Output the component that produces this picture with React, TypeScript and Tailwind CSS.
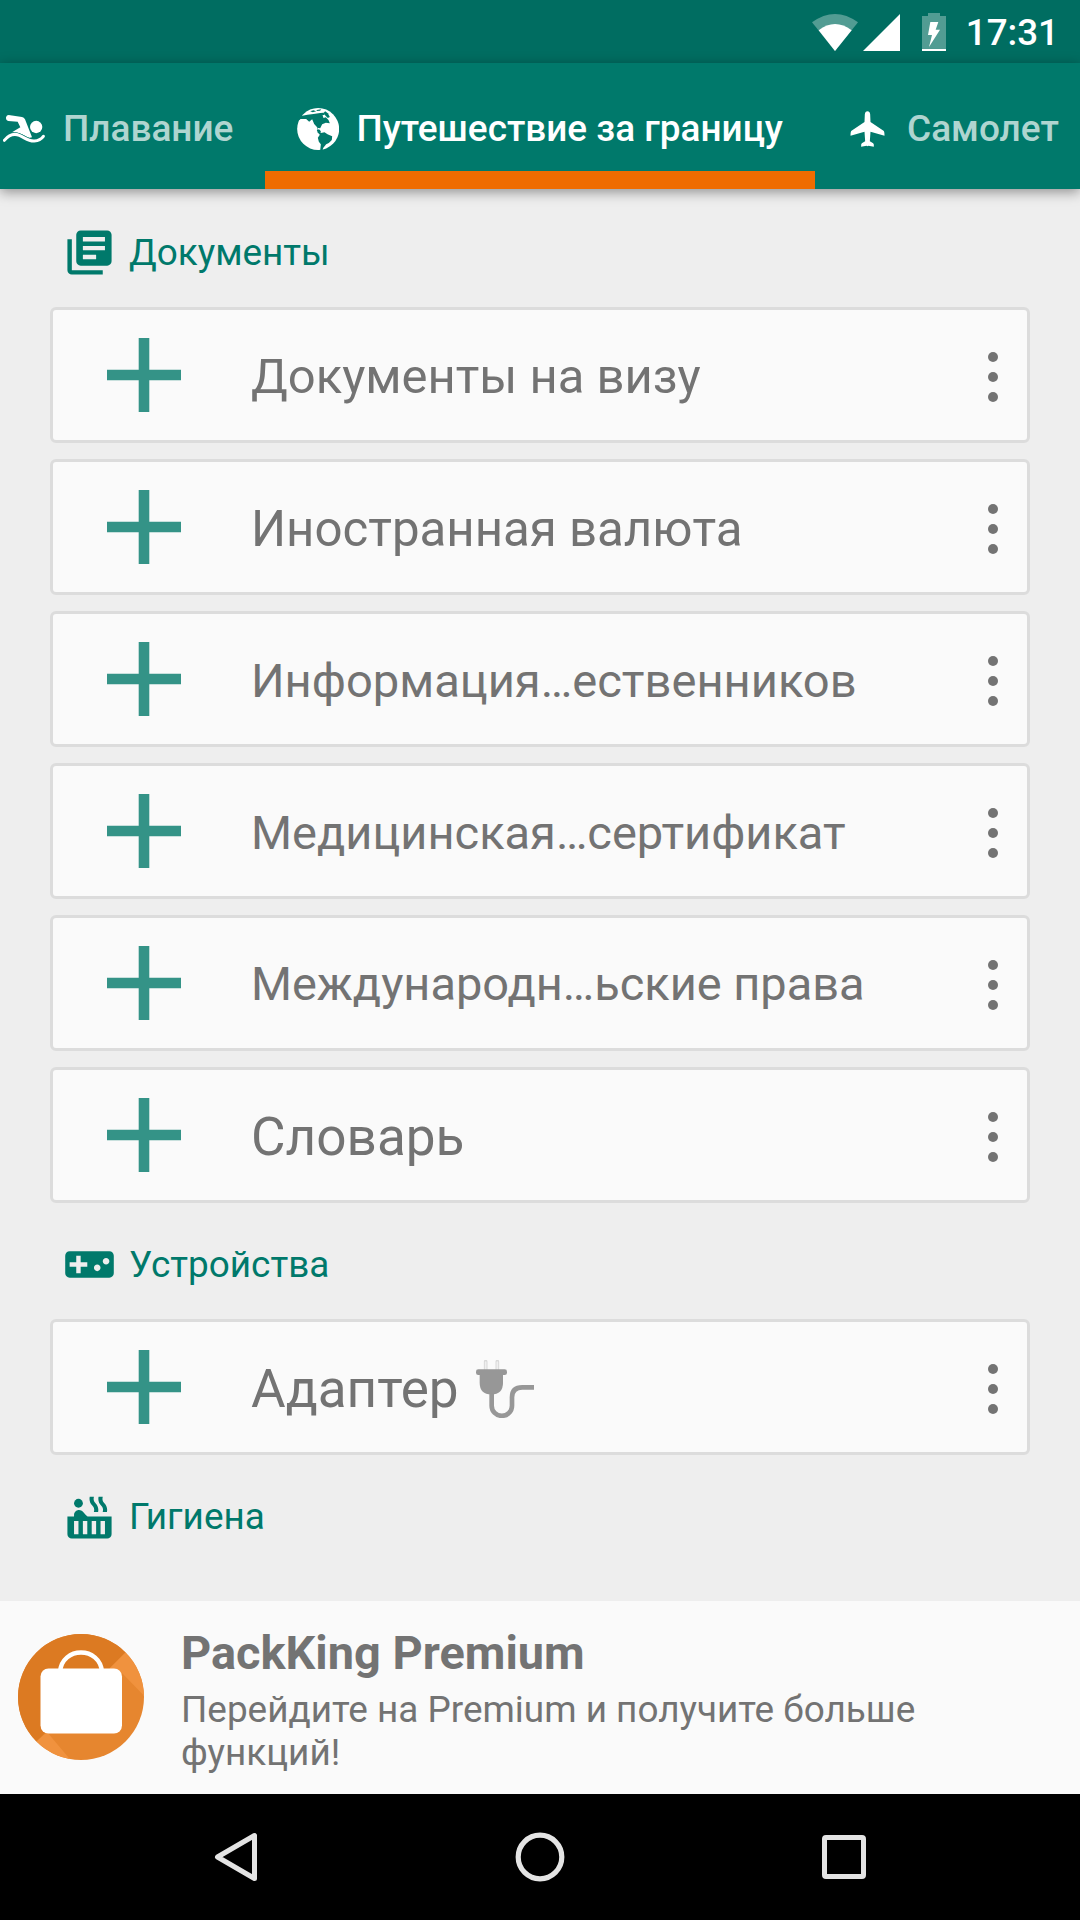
import {ReactNode} from "react";
import {MdHotTub, MdLibraryBooks, MdVideogameAsset} from "react-icons/md";

const documents = [
    {title: "Документы на визу", size: "text-[48.95px] pt-[4px]"},
    {title: "Иностранная валюта", size: "text-[49.2px] pt-[5px]"},
    {title: "Информация…ественников", size: "text-[47.1px] pt-[3px]"},
    {title: "Медицинская…сертификат", size: "text-[47px] pt-[3px]"},
    {title: "Международн…ьские права", size: "text-[46.95px] pt-[3px]"},
    {title: "Словарь", size: "text-[53.1px] pt-[5px]"},
];

const SwimIcon = () => (
    <svg className="w-[42px] h-[42px] shrink-0" viewBox="9 150 126 126" fill="none">
        <circle cx="108.5" cy="207" r="18.5" fill="#fff"/>
        <path d="M26 171 L66 177 Q72 178 75 184 L96 238 Q86 242 76 234 Q60 224 36 223 L61 208 L53 191 L25 189 Q17 187 18 178 Q20 171 26 171Z" fill="#fff"/>
        <path d="M13 247 C27 230 41 225 58 232 C76 240 85 250 103 249 C117 248 125 242 130 235" stroke="#00796b" strokeWidth="12"/>
        <path d="M13 247 C27 230 41 225 58 232 C76 240 85 250 103 249 C117 248 125 242 130 235" stroke="#fff" strokeWidth="9" strokeLinecap="round"/>
    </svg>
);

const GlobeIcon = () => (
    <svg className="w-[42px] h-[42px] shrink-0" viewBox="34.5 30 126 126">
        <circle cx="98" cy="93" r="63" fill="#fff"/>
        <g fill="#00796b">
            <path d="M34 68 L46 63 L62 63 L71 71 L80 64 L86 78 L97 90 L94 98 L101 105 L107 103 L103 95 L96 94 L94 89 L104 91 L110 79 L121 74 L133 76 L129 66 L121 58 L114 60 L111 52 L118 50 L114 44 L104 45 L84 48 L66 50 L50 53 L34 58Z"/>
            <path d="M114 45 L119 40 L127 46 L133 57 L127 60 L120 53Z"/>
            <path d="M98 98 L106 105 L117 103 L126 109 L140 115 L139 126 L130 135 L122 139 L113 150 L111 158 L104 158 L106 139 L100 131 L97 119 L103 110 L95 102Z"/>
            <path d="M74 40 L84 37 L92 40 L82 43ZM94 36 L107 34 L104 38 L93 39Z"/>
            <path d="M30 28 H80 Q56 34 46 54 L42 66 H30Z"/>
        </g>
    </svg>
);

const PlaneIcon = () => (
    <svg className="w-[42px] h-[42px] shrink-0" viewBox="19.5 15 126 126" fill="#fff">
        <path d="M81 25 Q88 25 89 34 L90 57 L129 83 Q132 85 132 98 L90 86 L88 115 L98 121 Q101 124 100 131 L84 128 L81 130 L78 128 L62 131 Q61 124 64 121 L74 115 L72 86 L30 98 Q30 85 33 83 L72 57 L73 34 Q74 25 81 25Z"/>
    </svg>
);

const PlugIcon = () => (
    <svg className="w-[58px] h-[62px] pt-1 ml-[17.5px] shrink-0" viewBox="108 150 174 174" fill="none">
        <path d="M137 180 V155 M172 180 V155" stroke="#d8d8d8" strokeWidth="11" strokeLinecap="round"/>
        <path d="M137 180 V156 M172 180 V156" stroke="#efefef" strokeWidth="5" strokeLinecap="round"/>
        <rect x="108" y="178" width="93" height="17" rx="7" fill="#979797"/>
        <path d="M119 190 H189 V218 Q189 253 154 253 Q119 253 119 218Z" fill="#979797"/>
        <path d="M155 250 V287 a30.5 30.5 0 0 0 61 0 V262 q0 -30 31 -30 H282" stroke="#979797" strokeWidth="14"/>
    </svg>
);

const StatusBar = () => (
    <div className="h-[63px] bg-[#006d61] flex items-center justify-end pr-[21px]">
        <svg className="w-[46px] h-[38px]" viewBox="96 36 138 114" fill="#fff">
            <path d="M165 150 L96 64 Q165 14 234 64Z" opacity=".32"/>
            <path d="M165 150 L116 88 Q165 50 215 88Z"/>
        </svg>
        <svg className="w-[37px] h-[38px] ml-[5px]" viewBox="0 0 37 38" fill="#fff">
            <path d="M0 38 H37 V1Z"/>
        </svg>
        <svg className="w-6 h-[38px] ml-[22px]" viewBox="426 36 72 114" fill="#fff">
            <path d="M426 45 H444 V36 H480 V45 H498 V142 H426Z" opacity=".32"/>
            <path d="M426 143 H498 V150 H426ZM451 63 H475 L467 86 H480 L447 138 L456 102 H444Z"/>
        </svg>
        <span className="ml-[20px] pt-1 text-[36.75px] leading-none font-medium">17:31</span>
    </div>
);

const Tabs = () => (
    <div className="h-[126px] bg-[#00796b] flex relative z-10 shadow-[0_3px_12px_rgba(0,0,0,0.4)] text-[37px] leading-none font-medium whitespace-nowrap">
        <div className="w-[265px] shrink-0 pl-[3px] pt-[5px] flex items-center gap-[18px]">
            <SwimIcon/>
            <span className="text-white/70">Плавание</span>
        </div>
        <div className="w-[550px] shrink-0 pl-[31.5px] pt-[23px] border-b-[18px] border-[#ef6c00] flex items-center gap-[18px]">
            <GlobeIcon/>
            <span className="text-[36.95px] pt-px">Путешествие за границу</span>
        </div>
        <div className="w-[265px] shrink-0 pl-[31.5px] pt-[5px] flex items-center gap-[18.5px]">
            <PlaneIcon/>
            <span className="text-white/70">Самолет</span>
        </div>
    </div>
);

const SectionHeader = ({icon, title}: { icon: ReactNode; title: string }) => (
    <div className="h-[116px] pt-[6px] pl-[13px] flex items-center gap-[13px] text-[#00796b] text-[36.9px] leading-none">
        {icon}
        <span className="pt-[2px]">{title}</span>
    </div>
);

const ItemCard = ({title, size, children}: { title: string; size: string; children?: ReactNode }) => (
    <div className="h-[136px] shrink-0 rounded-[6px] border-[3px] border-[#dcdcdc] bg-[#fafafa] flex items-center pl-[54px] pr-[29px]">
        <svg className="w-[74px] h-[74px] shrink-0" viewBox="0 0 74 74">
            <path d="M31.7 0 H42.3 V31.7 H74 V42.3 H42.3 V74 H31.7 V42.3 H0 V31.7 H31.7Z" fill="#349387"/>
        </svg>
        <div className="flex-1 flex items-center pl-[70px] text-[#737373] whitespace-nowrap">
            <span className={`${size} leading-none`}>{title}</span>
            {children}
        </div>
        <div className="flex flex-col gap-[9.5px] pt-[3.5px]">
            <div className="w-[10.5px] h-[10.5px] rounded-full bg-[#737373]"></div>
            <div className="w-[10.5px] h-[10.5px] rounded-full bg-[#737373]"></div>
            <div className="w-[10.5px] h-[10.5px] rounded-full bg-[#737373]"></div>
        </div>
    </div>
);

const PremiumBanner = () => (
    <div className="h-[193px] bg-[#fafafa] flex items-center pl-[18px] pb-[2px] text-[#737373]">
        <svg className="w-[126px] h-[126px] shrink-0" viewBox="0 0 126 126">
            <clipPath id="logo">
                <circle cx="63" cy="63" r="63"/>
            </clipPath>
            <g clipPath="url(#logo)">
                <rect width="126" height="126" fill="#e6862f"/>
                <path d="M0 0 H126 L0 126Z" fill="#dc7a22"/>
                <path d="M92 34 L108 18 L130 40 V66 L104 39 V60 H92ZM19 107 L29 98 L56 130 H19Z" fill="#f0923e"/>
            </g>
            <rect x="22.5" y="34.5" width="81.5" height="65" rx="8" fill="#fff"/>
            <path d="M42 38 C44 12 82 12 84 38" fill="none" stroke="#fff" strokeWidth="4.5"/>
        </svg>
        <div className="pl-[37px] pt-[5px]">
            <div className="text-[46.9px] leading-[56px] font-bold">PackKing Premium</div>
            <div className="text-[36.9px] leading-[43px] w-[800px] mt-[7px]">Перейдите на Premium и получите больше функций!</div>
        </div>
    </div>
);

const NavBar = () => (
    <div className="h-[126px] bg-black flex justify-center">
        <div className="w-[912px] grid grid-cols-3 items-center justify-items-center">
            <svg className="w-[50px] h-[50px]" viewBox="0 0 50 50" fill="none" stroke="#e4e4e4" strokeWidth="5" strokeLinejoin="round">
                <path d="M6.5 25 L43.5 3.5 V46.5Z"/>
            </svg>
            <svg className="w-[50px] h-[50px]" viewBox="0 0 50 50" fill="none" stroke="#e4e4e4" strokeWidth="5.2">
                <circle cx="25" cy="25" r="21.8"/>
            </svg>
            <svg className="w-[50px] h-[50px]" viewBox="0 0 50 50" fill="none" stroke="#e4e4e4" strokeWidth="5">
                <rect x="5.5" y="5.5" width="39" height="39" rx="1.5"/>
            </svg>
        </div>
    </div>
);

const App = () => {
    return (
        <div className="w-[1080px] h-[1920px] flex flex-col overflow-hidden bg-[#eeeeee] text-white font-[Roboto,sans-serif]">
            <StatusBar/>
            <Tabs/>
            <div className="flex-1 min-h-0 overflow-hidden px-[50px] pt-[2px]">
                <SectionHeader icon={<MdLibraryBooks className="w-[53px] h-[53px]"/>} title="Документы"/>
                <div className="flex flex-col gap-4">
                    {documents.map((item) => <ItemCard key={item.title} title={item.title} size={item.size}/>)}
                </div>
                <SectionHeader icon={<MdVideogameAsset className="w-[53px] h-[53px]"/>} title="Устройства"/>
                <ItemCard title="Адаптер" size="text-[53.1px] pt-[5px]">
                    <PlugIcon/>
                </ItemCard>
                <SectionHeader icon={<MdHotTub className="w-[53px] h-[53px]"/>} title="Гигиена"/>
            </div>
            <PremiumBanner/>
            <NavBar/>
        </div>
    );
};

export default App;
